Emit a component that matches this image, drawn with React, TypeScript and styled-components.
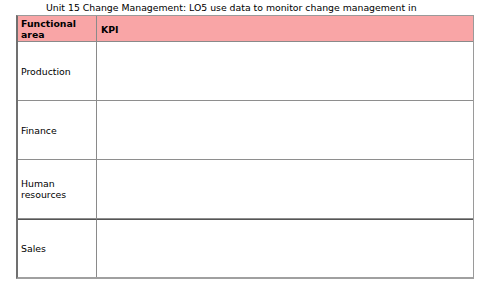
import React from "react";
import styled, { createGlobalStyle } from "styled-components";

const GlobalStyle = createGlobalStyle`
  body {
    margin: 0;
    background: #ffffff;
    font-family: "DejaVu Sans", sans-serif;
    color: #000;
  }
`;

const rows = ["Production", "Finance", "Human resources", "Sales"];

const App = () => {
  return (
    <Page>
      <GlobalStyle />
      <Title>Unit 15 Change Management: LO5 use data to monitor change management in</Title>
      <Table>
        <HeadCell first>Functional area</HeadCell>
        <HeadCell>KPI</HeadCell>
        {rows.map((r, i) => (
          <React.Fragment key={r}>
            <Cell first dark={i === 3}>
              <Label>{r}</Label>
            </Cell>
            <Cell dark={i === 3} />
          </React.Fragment>
        ))}
      </Table>
    </Page>
  );
};

export default App;

const Page = styled.div`
  width: 500px;
  height: 281px;
  padding: 2px 0 0 16px;
  box-sizing: border-box;
`;

const Title = styled.div`
  font-size: 9.33px;
  line-height: 11px;
  padding-left: 30px;
  white-space: nowrap;
`;

const Table = styled.div`
  display: grid;
  grid-template-columns: 79px 1fr;
  grid-template-rows: 26px 59px 59px 59px 58px;
  width: 458px;
  margin-top: 2px;
  box-sizing: border-box;
  border: 1px solid #9a9a9a;
  border-left: 2px solid #707070;
  border-bottom: 2px solid #a0a0a0;
`;

const HeadCell = styled.div<{ first?: boolean }>`
  background: #f9a5a6;
  font-size: 9.33px;
  font-weight: bold;
  line-height: 11px;
  padding: 2px 0 0 ${(p) => (p.first ? "3px" : "4px")};
  display: flex;
  align-items: ${(p) => (p.first ? "flex-start" : "center")};
  border-bottom: 1px solid #8a8a8a;
  border-right: ${(p) => (p.first ? "1px solid #8a8a8a" : "none")};
`;

const Cell = styled.div<{ first?: boolean; dark?: boolean }>`
  display: flex;
  align-items: center;
  padding-left: 3px;
  border-top: ${(p) => (p.dark ? "1px solid #555" : "none")};
  border-bottom: 1px solid #8e8e8e;
  border-right: ${(p) => (p.first ? "1px solid #8a8a8a" : "none")};
  &:last-child {
    border-bottom: none;
  }
  &:nth-last-child(2) {
    border-bottom: none;
  }
`;

const Label = styled.span`
  font-size: 9.33px;
  line-height: 11px;
  width: 60px;
`;
